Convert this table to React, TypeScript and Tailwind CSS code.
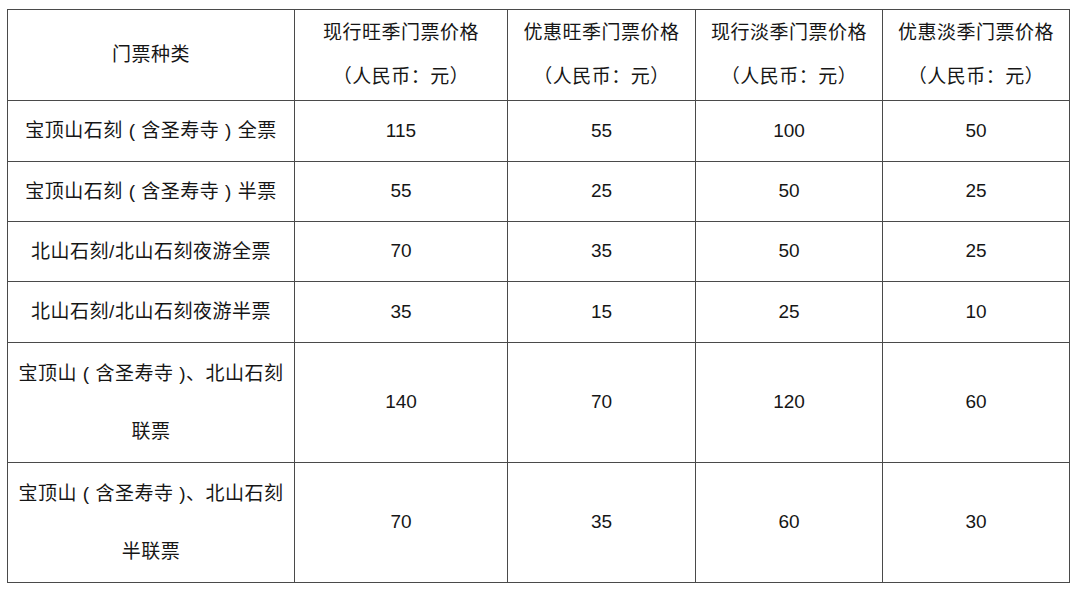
const cols = ['w-[287px]', 'w-[213px]', 'w-[188px]', 'w-[187px]', 'w-[187px]']

const headers = ['现行旺季门票价格', '优惠旺季门票价格', '现行淡季门票价格', '优惠淡季门票价格']

interface Row {
  name: string[]
  prices: string[]
  h: string
}

const rows: Row[] = [
  { name: ['宝顶山石刻 ( 含圣寿寺 ) 全票'], prices: ['115', '55', '100', '50'], h: 'h-[61px]' },
  { name: ['宝顶山石刻 ( 含圣寿寺 ) 半票'], prices: ['55', '25', '50', '25'], h: 'h-[60px]' },
  { name: ['北山石刻/北山石刻夜游全票'], prices: ['70', '35', '50', '25'], h: 'h-[60px]' },
  { name: ['北山石刻/北山石刻夜游半票'], prices: ['35', '15', '25', '10'], h: 'h-[61px]' },
  { name: ['宝顶山 ( 含圣寿寺 )、北山石刻', '联票'], prices: ['140', '70', '120', '60'], h: 'h-[120px]' },
  { name: ['宝顶山 ( 含圣寿寺 )、北山石刻', '半联票'], prices: ['70', '35', '60', '30'], h: 'h-[120px]' },
]

export default function App() {
  return (
    <div
      className="w-[1080px] h-[591px] bg-white pt-[9px] pl-[7px] text-[#161616]"
      style={{ fontFamily: '"Liberation Sans", "Noto Sans CJK SC", sans-serif' }}
    >
      <table className="border-collapse table-fixed w-[1063px]">
        <colgroup>
          {cols.map((c, i) => <col key={i} className={c} />)}
        </colgroup>
        <thead>
          <tr className="h-[91px]">
            <th className="border border-[#4a4a4a] font-normal text-[19px] tracking-[0.5px]">门票种类</th>
            {headers.map(h => (
              <th key={h} className="border border-[#4a4a4a] font-normal text-[19px] tracking-[0.5px] leading-[44px]">
                <div>{h}</div>
                <div>（人民币：元）</div>
              </th>
            ))}
          </tr>
        </thead>
        <tbody>
          {rows.map((r, i) => (
            <tr key={i} className={r.h}>
              <td className="border border-[#4a4a4a] text-center text-[19px] tracking-[0.5px] leading-[58px] whitespace-pre">
                {r.name.map((n, j) => <div key={j}>{n}</div>)}
              </td>
              {r.prices.map((p, j) => (
                <td key={j} className="border border-[#4a4a4a] text-center text-[19px]">{p}</td>
              ))}
            </tr>
          ))}
        </tbody>
      </table>
    </div>
  )
}
